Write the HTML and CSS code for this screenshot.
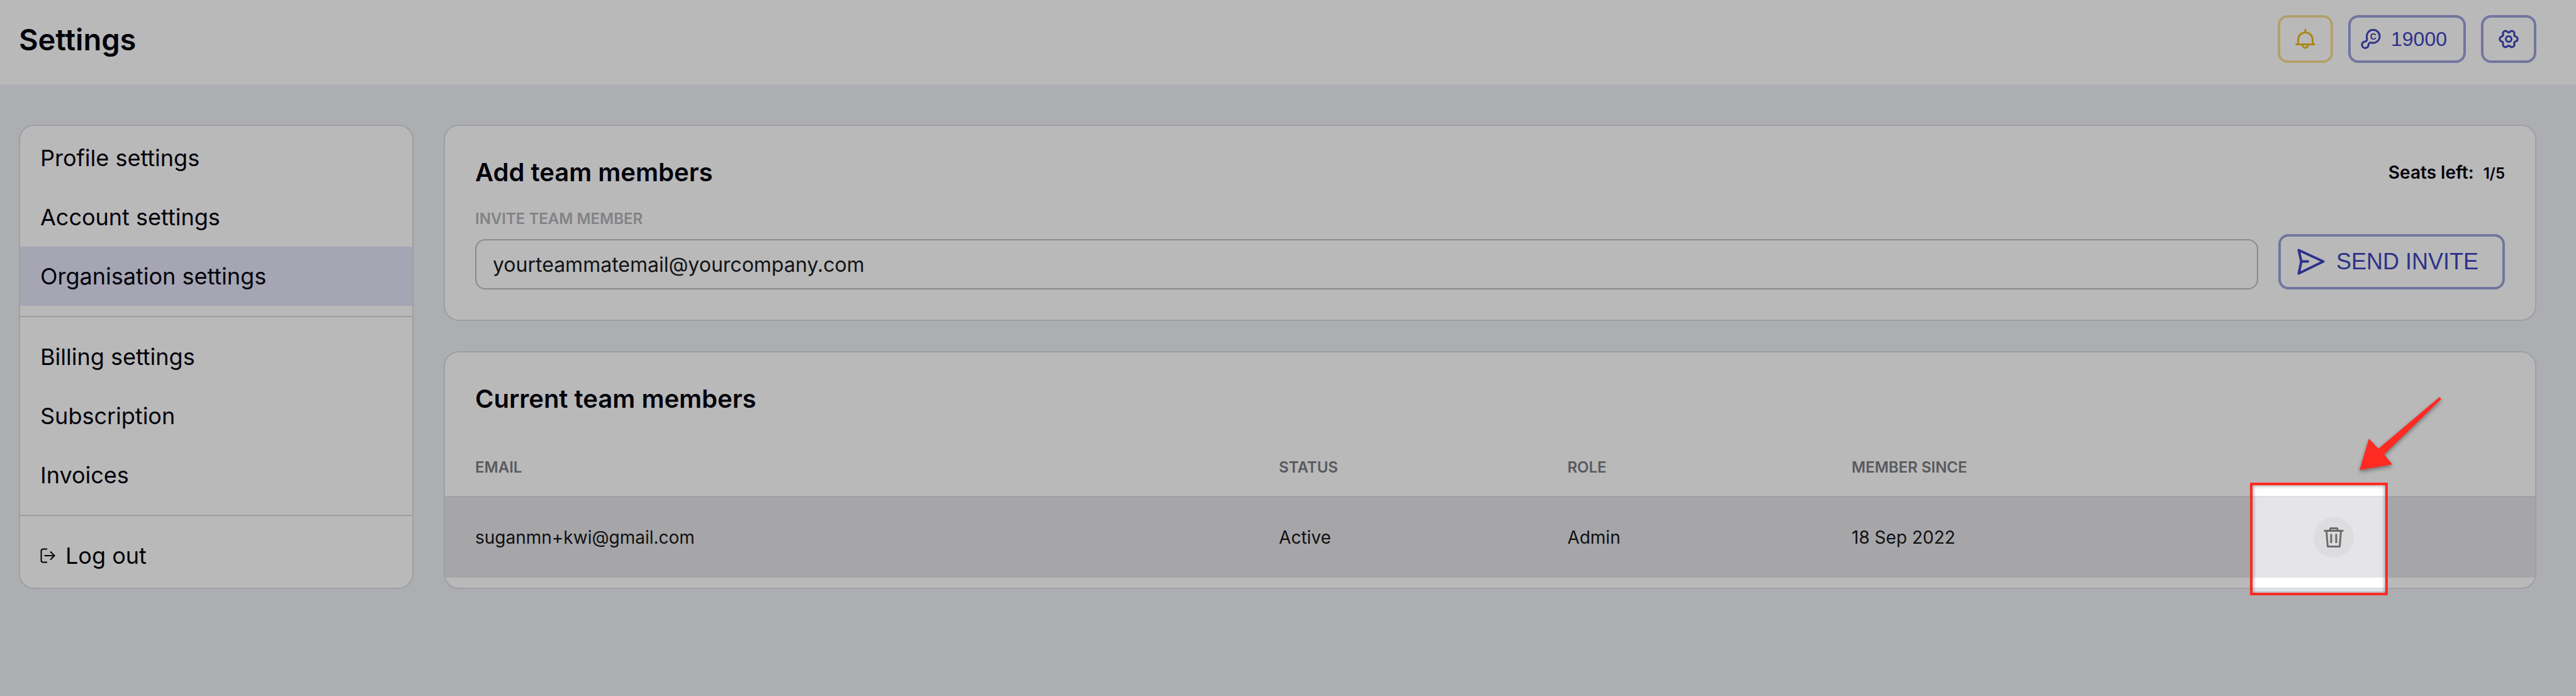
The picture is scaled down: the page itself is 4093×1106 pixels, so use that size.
FILE: index.html
```html
<!DOCTYPE html>
<html lang="en">
<head>
    <meta charset="UTF-8">
    <meta name="viewport" content="width=device-width, initial-scale=1.0">
    <title>Settings</title>
    <link rel="stylesheet" href="styles.css">
</head>
<body>
    <header class="topbar">
        <h1>Settings</h1>
        <div class="topbar-actions">
            <button class="btn btn-icon btn-warning" type="button" aria-label="Notifications">
                <svg width="32" height="32" viewBox="0 0 32 32" fill="none" stroke="currentColor" stroke-width="3">
                    <path d="M16 0V6M4.5 23V17A11.5 11.5 0 0 1 27.5 17V23M0.5 24.5H31.5M11.5 25A4.5 5 0 0 0 20.5 25"/>
                </svg>
            </button>
            <button class="btn btn-credits" type="button">
                <svg width="32" height="32" viewBox="0 0 32 32" fill="none" stroke="currentColor" stroke-width="3" aria-hidden="true">
                    <path d="M9.8 14.5A10.3 10.3 0 1 1 17.5 21.9C14 21.3 13 22.5 12.3 25A5.2 5.2 0 1 1 7 20C9.5 19.5 10.4 18 9.8 14.5Z"/>
                    <text class="coin" x="19.7" y="17" text-anchor="middle">C</text>
                </svg>
                <span>19000</span>
            </button>
            <button class="btn btn-icon" type="button" aria-label="Preferences">
                <svg width="32" height="32" viewBox="-16 -16 32 32" fill="none" stroke="currentColor" stroke-width="3">
                    <path d="M14.2 0Q14.2 3 11.2 3.9Q8.2 4.75 8.95 7.8Q9.7 10.8 7.1 12.3Q4.5 13.8 2.25 11.65Q0 9.5 -2.25 11.65Q-4.5 13.8 -7.1 12.3Q-9.7 10.8 -8.95 7.8Q-8.2 4.75 -11.2 3.9Q-14.2 3 -14.2 0Q-14.2 -3 -11.2 -3.9Q-8.2 -4.75 -8.95 -7.8Q-9.7 -10.8 -7.1 -12.3Q-4.5 -13.8 -2.25 -11.65Q0 -9.5 2.25 -11.65Q4.5 -13.8 7.1 -12.3Q9.7 -10.8 8.95 -7.8Q8.2 -4.75 11.2 -3.9Q14.2 -3 14.2 0Z"/>
                    <circle r="4.5"/>
                </svg>
            </button>
        </div>
    </header>

    <div class="layout">
        <nav class="sidebar">
            <a href="#profile">Profile settings</a>
            <a href="#account">Account settings</a>
            <a href="#organisation" class="active">Organisation settings</a>
            <hr>
            <a href="#billing">Billing settings</a>
            <a href="#subscription">Subscription</a>
            <a href="#invoices">Invoices</a>
            <hr>
            <a href="#logout">
                <svg width="24" height="24" viewBox="0 0 24 24" fill="none" stroke="currentColor" stroke-width="2" aria-hidden="true">
                    <path d="M11 1.5H4.5Q1.5 1.5 1.5 4.5V19.5Q1.5 22.5 4.5 22.5H11M6.5 12H22M16 5.5L22.5 12L16 18.5"/>
                </svg>
                Log out
            </a>
        </nav>

        <main class="content">
            <section class="card">
                <div class="card-header">
                    <h2>Add team members</h2>
                    <p class="seats">Seats left: <span>1/5</span></p>
                </div>
                <form class="invite">
                    <div class="form-group">
                        <label for="invite-email">INVITE TEAM MEMBER</label>
                        <input type="email" id="invite-email" value="yourteammatemail@yourcompany.com">
                    </div>
                    <button class="btn btn-send" type="button">
                        <svg width="44" height="42" viewBox="0 0 44 42" fill="none" stroke="currentColor" stroke-width="4" stroke-linejoin="round" stroke-linecap="round" aria-hidden="true">
                            <path d="M2.5 2.5L41.5 20.5L2.5 39.5L6.5 20.5ZM6.5 20.5H17"/>
                        </svg>
                        <span>SEND INVITE</span>
                    </button>
                </form>
            </section>

            <section class="card card-table">
                <div class="card-header">
                    <h2>Current team members</h2>
                </div>
                <table>
                    <thead>
                        <tr>
                            <th class="col-email">EMAIL</th>
                            <th class="col-status">STATUS</th>
                            <th class="col-role">ROLE</th>
                            <th class="col-since">MEMBER SINCE</th>
                            <th></th>
                        </tr>
                    </thead>
                    <tbody>
                        <tr>
                            <td>suganmn+kwi@gmail.com</td>
                            <td>Active</td>
                            <td>Admin</td>
                            <td>18 Sep 2022</td>
                            <td>
                                <div class="row-action">
                                    <button class="btn-delete" type="button" aria-label="Remove member">
                                        <svg width="32" height="32" viewBox="0 0 32 32" fill="none" stroke="currentColor" stroke-width="3" stroke-linejoin="round" aria-hidden="true">
                                            <path d="M0.5 5.5H31.5M9.5 5.5L11 1.5H21.5L23 5.5M4.5 6L6.5 30.5H25.5L27.5 6M12 10.5V25M20 10.5V25"/>
                                        </svg>
                                    </button>
                                    <!-- spotlight dims the rest of the page -->
                                    <div class="spotlight"></div>
                                    <svg class="arrow" width="140" height="124" viewBox="0 0 140 124" aria-hidden="true">
                                        <path d="M4 120L19 70L34 86L131 4L134 7L43 95L56 111Z"/>
                                    </svg>
                                </div>
                            </td>
                        </tr>
                    </tbody>
                </table>
            </section>
        </main>
    </div>
</body>
</html>
```
FILE: styles.css
```css
* {
    box-sizing: border-box;
}
body {
    font-family: Inter, sans-serif;
    margin: 0;
    min-height: 100vh;
    overflow: hidden;
    background-color: #eef0f5;
    color: #02020f;
}
h1, h2, p {
    margin: 0;
}
h1 {
    font-size: 47px;
    font-weight: 600;
}
h2 {
    font-size: 40px;
    font-weight: 600;
    line-height: 52px;
}
.topbar {
    display: flex;
    justify-content: space-between;
    align-items: center;
    padding: 24px 63px 34px 30px;
    background: white;
}
.topbar-actions {
    display: flex;
    gap: 24px;
}

/* buttons */
.btn {
    display: flex;
    align-items: center;
    justify-content: center;
    height: 76px;
    padding: 0;
    background: transparent;
    border: 4px solid #9da2dd;
    border-radius: 16px;
    color: #3e46bd;
    font-family: "Liberation Sans", sans-serif;
    cursor: pointer;
}
.btn-icon {
    width: 88px;
}
.btn-warning {
    border-color: #f7dd95;
    color: #edb923;
}
.btn-credits {
    gap: 16px;
    padding: 0 26px 0 16px;
    font-size: 32px;
}
.coin {
    font-size: 14px;
    font-weight: bold;
    fill: currentColor;
    stroke: none;
}
.btn-send {
    flex-shrink: 0;
    gap: 18px;
    height: 88px;
    padding: 0 38px 0 26px;
    font-size: 36px;
}

/* page layout */
.layout {
    display: flex;
    align-items: flex-start;
    gap: 48px;
    padding: 64px 63px 64px 30px;
}
.sidebar {
    flex: 0 0 627px;
    padding: 4px 0;
    background: white;
    border: 2px solid #dadbde;
    border-radius: 24px;
}
.sidebar a {
    display: flex;
    align-items: center;
    gap: 16px;
    height: 94px;
    padding: 0 32px;
    color: inherit;
    font-size: 36px;
    text-decoration: none;
}
.sidebar a.active {
    background-color: #e4e4f8;
}
.sidebar hr {
    margin: 16px 0;
    border: 0;
    border-top: 2px solid #dadbde;
}
.content {
    flex: 1;
    min-width: 0;
    display: flex;
    flex-direction: column;
    gap: 48px;
}
.card {
    padding: 48px;
    background: white;
    border: 2px solid #dadbde;
    border-radius: 24px;
}
.card-header {
    display: flex;
    justify-content: space-between;
    align-items: center;
}
.seats {
    font-size: 28px;
    font-weight: 600;
}
.seats span {
    margin-left: 8px;
    font-size: 24px;
}

/* invite form */
.invite {
    display: flex;
    align-items: flex-end;
    gap: 32px;
    margin-top: 32px;
}
.form-group {
    flex: 1;
}
label {
    display: block;
    margin-bottom: 16px;
    color: #b3b4b8;
    font-size: 24px;
    font-weight: 600;
    line-height: 32px;
}
input {
    display: block;
    width: 100%;
    height: 80px;
    padding: 0 26px;
    background: white;
    border: 2px solid #c0c0c0;
    border-radius: 16px;
    color: #1a1b1f;
    font-family: inherit;
    font-size: 32px;
}

/* members table */
.card-table {
    padding: 48px 0 16px;
}
.card-table .card-header {
    padding: 0 48px;
    margin-bottom: 36px;
}
table {
    width: 100%;
    table-layout: fixed;
    border-spacing: 0;
}
th, td {
    padding: 0;
    text-align: left;
}
th:first-child, td:first-child {
    padding-left: 48px;
}
th {
    height: 92px;
    color: #7b7c84;
    font-size: 24px;
    font-weight: 600;
}
td {
    height: 130px;
    background-color: #e5e5e9;
    border-top: 2px solid #dedee0;
    color: #17171a;
    font-size: 28px;
}
.col-email {
    width: 39.9%;
}
.col-status {
    width: 13.8%;
}
.col-role {
    width: 13.6%;
}
.col-since {
    width: 22.1%;
}
.row-action {
    position: relative;
    width: 64px;
    height: 64px;
}
.btn-delete {
    display: flex;
    align-items: center;
    justify-content: center;
    width: 64px;
    height: 64px;
    padding: 0;
    background: #dddddf;
    border: 0;
    border-radius: 50%;
    color: #6c6c6c;
    cursor: pointer;
}
.spotlight {
    position: absolute;
    top: -55px;
    left: -101px;
    width: 219px;
    height: 179px;
    border: 4px solid #ff2a22;
    box-shadow: 0 0 0 9999px rgba(0, 0, 0, 0.275), inset 0 0 6px rgba(0, 0, 0, 0.5);
    pointer-events: none;
}
.arrow {
    position: absolute;
    top: -195px;
    left: 69px;
    fill: #ff2a22;
    filter: drop-shadow(0 3px 3px rgba(0, 0, 0, 0.4));
    pointer-events: none;
}
```
